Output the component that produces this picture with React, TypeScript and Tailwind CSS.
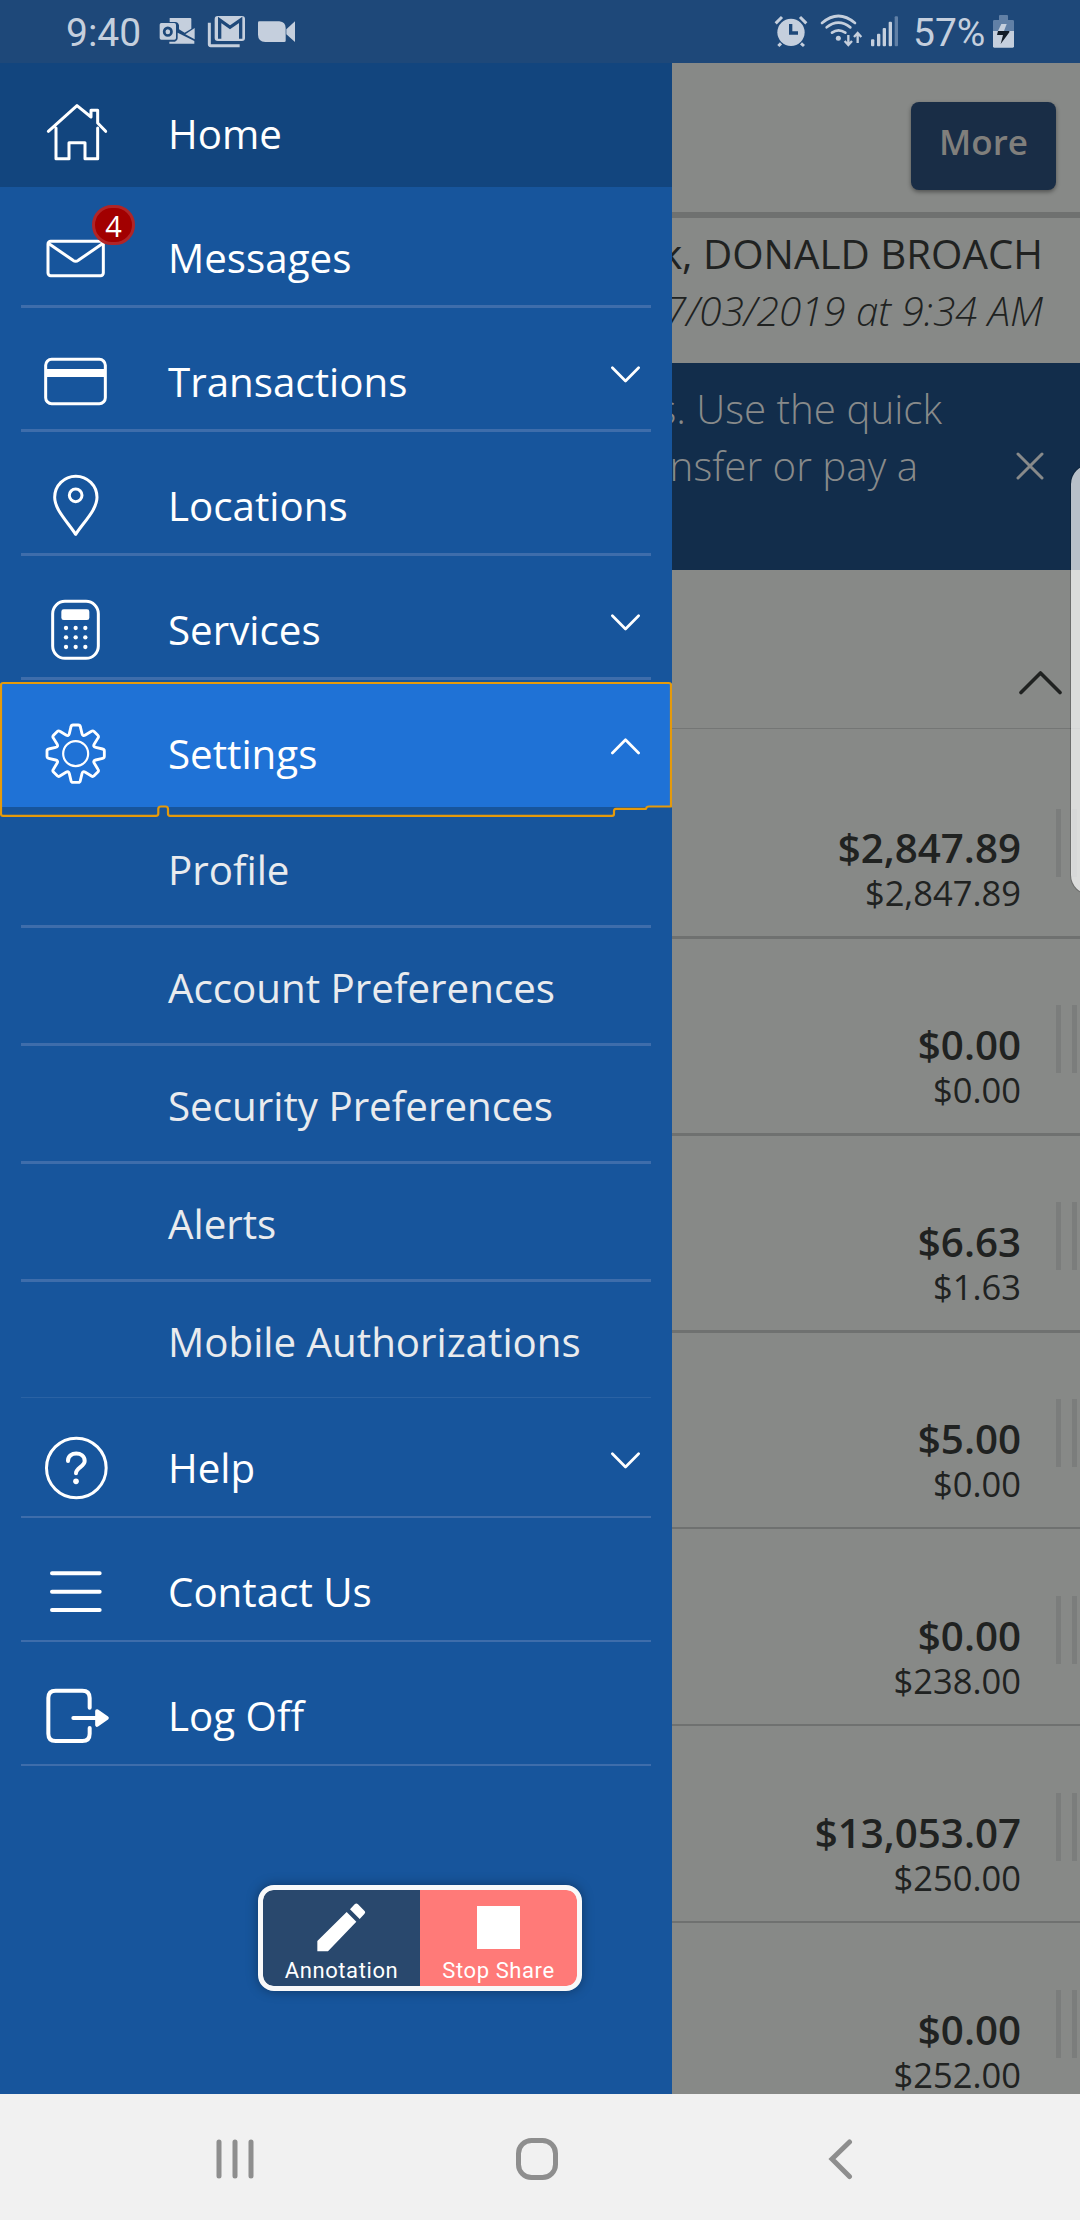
import type { ReactNode } from "react";

const LIGHT = "#c5cfdd";

// Eight-tooth gear outline centred on (227, 281).
function gearPath(): string {
  const at = (x: number, y: number, k: number) => {
    const a = (k * Math.PI) / 4;
    const px = 227 + x * Math.cos(a) - y * Math.sin(a);
    const py = 281 + x * Math.sin(a) + y * Math.cos(a);
    return `${px.toFixed(1)} ${py.toFixed(1)}`;
  };
  let d = "";
  for (let k = 0; k < 8; k++) {
    d += `${k === 0 ? "M" : "L"}${at(-19, -60, k)} L${at(-14, -81, k)} Q${at(-13, -86, k)} ${at(-8, -86, k)} `;
    d += `L${at(8, -86, k)} Q${at(13, -86, k)} ${at(14, -81, k)} L${at(19, -60, k)} `;
    d += `Q${at(21, -51, k)} ${at(-19, -60, k + 1)} `;
  }
  return d + "Z";
}

function MenuIcon({ y, children }: { y: number; children: ReactNode }) {
  return (
    <svg
      className="h-[124px] w-[168px] shrink-0"
      viewBox={`0 ${y} 504 372`}
      fill="none"
      stroke="#fff"
      strokeWidth="9"
      strokeLinecap="round"
      strokeLinejoin="round"
    >
      {children}
    </svg>
  );
}

const icons: Record<string, ReactNode> = {
  Home: (
    <MenuIcon y={189}>
      <path d="M145 394 L231 317 L273 351 V331 H293 V369 L317 394 M168 384 V476 H207 V428 H255 V476 H293 V384" />
    </MenuIcon>
  ),
  Messages: (
    <MenuIcon y={561}>
      <rect x="144" y="724" width="166" height="103" rx="8" />
      <path d="M147 731 L219 781 Q227 787 235 781 L307 731" />
    </MenuIcon>
  ),
  Transactions: (
    <MenuIcon y={-27}>
      <rect x="137" y="118" width="179" height="133" rx="18" />
      <path d="M141 159 H313" strokeWidth="24" strokeLinecap="butt" />
    </MenuIcon>
  ),
  Locations: (
    <MenuIcon y={345}>
      <path d="M227 643 C205 608 164 570 164 532 A63.500 63.500 0 0 1 291 532 C291 570 249 608 227 643 Z" />
      <circle cx="227" cy="526" r="19" />
    </MenuIcon>
  ),
  Services: (
    <MenuIcon y={717}>
      <rect x="158" y="844" width="137" height="171" rx="37" />
      <rect x="184" y="868" width="84" height="32" rx="7" fill="#fff" stroke="none" />
      <g fill="#fff" stroke="none">
        {[924, 952, 981].map((cy) =>
          [198, 227, 256].map((cx) => <circle key={`${cx}-${cy}`} cx={cx} cy={cy} r="6.5" />)
        )}
      </g>
    </MenuIcon>
  ),
  Settings: (
    <MenuIcon y={69}>
      <path d={gearPath()} strokeWidth="8.500" />
      <circle cx="227" cy="281" r="37.500" strokeWidth="6.500" />
    </MenuIcon>
  ),
  Help: (
    <MenuIcon y={51}>
      <circle cx="229" cy="264" r="89.500" />
      <path
        d="M204 243 C203 213 254 213 254 243 C254 260 228 263 228 280"
        strokeWidth="12"
      />
      <circle cx="228" cy="304" r="8.500" fill="#fff" stroke="none" />
    </MenuIcon>
  ),
  "Contact Us": (
    <MenuIcon y={423}>
      <path d="M156 580 H299 M156 635 H299 M156 690 H299" strokeWidth="12" />
    </MenuIcon>
  ),
  "Log Off": (
    <MenuIcon y={795}>
      <path
        d="M269 983 V954 Q269 932 247 932 H167 Q145 932 145 954 V1061 Q145 1083 167 1083 H247 Q269 1083 269 1061 V1044"
        strokeWidth="12"
      />
      <path d="M220 1014 H290" strokeWidth="12" />
      <path d="M291 993 L321 1014 L291 1035 Z" fill="#fff" strokeWidth="11" />
    </MenuIcon>
  ),
};

function Chevron({ up }: { up?: boolean }) {
  return (
    <svg
      className="mr-8 h-[17px] w-[29px]"
      viewBox="0 0 29 17"
      fill="none"
      stroke="#fff"
      strokeWidth="2.700"
      strokeLinecap="round"
      strokeLinejoin="round"
    >
      <path d={up ? "M1.400 15 L14.500 1.700 L27.600 15" : "M1.400 1.700 L14.500 15 L27.600 1.700"} />
    </svg>
  );
}

function MenuRow({
  label,
  tone = "",
  chevron,
  divider = "after:top-[118px] after:h-[3px]",
  badge,
}: {
  label: string;
  tone?: string;
  chevron?: "up" | "down";
  divider?: string;
  badge?: string;
}) {
  return (
    <div
      className={`relative flex h-[124px] shrink-0 items-start after:absolute after:right-[21px] after:left-[21px] after:bg-[#3e6dab] ${divider} ${tone}`}
    >
      {icons[label]}
      {badge && (
        <span className="absolute top-[18px] left-[92px] flex h-[40px] w-[43px] items-center justify-center rounded-[20px] border-[3px] border-[#b02527] bg-[#a20000] text-[29px] leading-none">
          {badge}
        </span>
      )}
      <span className="flex-1 pt-[42px] text-[40.3px] leading-[57px]">{label}</span>
      {chevron && (
        <div className="pt-[55px]">
          <Chevron up={chevron === "up"} />
        </div>
      )}
    </div>
  );
}

const subItems = [
  "Profile",
  "Account Preferences",
  "Security Preferences",
  "Alerts",
  "Mobile Authorizations",
];

const accounts = [
  ["$2,847.89", "$2,847.89"],
  ["$0.00", "$0.00"],
  ["$6.63", "$1.63"],
  ["$5.00", "$0.00"],
  ["$0.00", "$238.00"],
  ["$13,053.07", "$250.00"],
  ["$0.00", "$252.00"],
];

function StatusBar() {
  return (
    <header className="flex h-[63px] shrink-0 items-center justify-between bg-[#1e4879] pr-[65px] pl-[66px] font-[Roboto,sans-serif] text-[39px] leading-[63px] text-[#c5cfdd]">
      <div className="flex h-[63px] items-center">
        <span className="w-[93px] pt-1">9:40</span>
        <svg className="h-[63px] w-[137px]" viewBox="477 0 411 189" fill={LIGHT}>
          <path d="M509 54 H571 Q574 54 574 57 V86 L554 98 L537 88 V76 Q534 66 526 66 H509 Z" />
          <path d="M584 84 V118 L556 103 Z M533 98 L583 123 V131 H508 V125 H525 Q533 123 533 115 Z" />
          <rect x="479" y="69" width="49" height="50" rx="5" />
          <ellipse cx="503.500" cy="95" rx="11" ry="11.500" fill="none" stroke="#1e4879" strokeWidth="8" />
          <path d="M628 68 V133 Q628 137 632 137 H719" fill="none" stroke={LIGHT} strokeWidth="9" />
          <rect x="644" y="48" width="91" height="75" rx="9" />
          <path d="M659 116 V60 L690 82 L722 60 V116" fill="none" stroke="#1e4879" strokeWidth="10" />
          <path d="M774 68 Q774 64 778 64 H838 Q857 66 857 84 V122 Q857 126 853 126 H796 Q774 124 774 104 Z" />
          <path d="M859 88 L885 64 V126 L859 103 Z" />
        </svg>
      </div>
      <div className="flex h-[63px] items-center">
        <svg className="h-[63px] w-[140px]" viewBox="162 0 420 189" fill={LIGHT}>
          <circle cx="213" cy="97" r="41" />
          <path
            d="M167 70 L186 51 M240 51 L259 70 M183 130 L175 138 M243 130 L252 138"
            stroke={LIGHT}
            strokeWidth="9"
          />
          <path d="M212 72 V99 H234" fill="none" stroke="#1e4879" strokeWidth="10" />
          <g fill="none" stroke={LIGHT} strokeWidth="8" strokeLinecap="round">
            <path d="M306 69 Q355 27 405 69 M320 82 Q355 54 391 82 M336 98 Q355 84 376 98" />
          </g>
          <circle cx="355" cy="115" r="7.500" />
          <path
            d="M385 105 V134 M374 123 L385 135 L396 123 M413 129 V100 M402 111 L413 99 L424 111"
            fill="none"
            stroke={LIGHT}
            strokeWidth="7"
          />
          <rect x="453" y="118" width="10" height="21" rx="3" />
          <rect x="471" y="101" width="10" height="38" rx="3" />
          <rect x="488" y="84" width="10" height="55" rx="3" />
          <rect x="506" y="65" width="10" height="74" rx="3" />
          <rect x="524" y="49" width="10" height="90" rx="3" fill="#6180a6" />
        </svg>
        <span className="-ml-px w-[79px] pt-1">57%</span>
        <svg className="h-[63px] w-[23px]" viewBox="816 0 69 189">
          <path d="M837 60 V48 Q837 45 840 45 H861 Q864 45 864 48 V60 H878 Q882 60 882 64 V93 H819 V64 Q819 60 823 60 Z" fill="#6180a6" />
          <path d="M819 93 H882 V139 Q882 143 878 143 H823 Q819 143 819 139 Z" fill={LIGHT} />
          <path d="M844 72 H860 L852 93 H834 Z" fill={LIGHT} />
          <path d="M834 93 H868 V97 L842 132 L849 105 H831 Z" fill="#131c28" />
        </svg>
      </div>
    </header>
  );
}

function Drawer() {
  return (
    <nav className="relative flex h-full w-[672px] shrink-0 flex-col bg-[#17559c] text-white">
      <MenuRow label="Home" tone="bg-[#12457e]" divider="after:hidden" />
      <MenuRow label="Messages" badge="4" />
      <MenuRow label="Transactions" chevron="down" />
      <MenuRow label="Locations" />
      <MenuRow label="Services" chevron="down" />
      <MenuRow label="Settings" chevron="up" tone="bg-[#1f72d6]" divider="after:hidden" />
      <svg
        className="absolute top-[618px] left-0 h-[140px] w-[672px]"
        viewBox="0 681 672 140"
        fill="none"
        stroke="#e59a0b"
        strokeWidth="2.200"
        strokeLinejoin="round"
      >
        <path d="M3 683 H669 Q671 683 671 685 V806.500 H649 Q646.500 806.500 646 808.800 H616 Q614 809 614 811 V814 Q614 815.800 612 815.800 H170 Q168 815.800 168 813.500 V809 Q168 806.500 165.500 806.500 H161 Q158.300 806.500 158.300 809 V813.500 Q158.300 815.800 156 815.800 H3 Q1 815.800 1 814 V685 Q1 683 3 683 Z" />
      </svg>
      {subItems.map((item, i) => (
        <div
          key={item}
          className={`relative h-[118px] shrink-0 pt-[34px] pl-[168px] text-[40.3px] leading-[57px] text-[#e9ebee] ${
            i > 0
              ? "before:absolute before:top-0 before:right-[21px] before:left-[21px] before:h-[3px] before:bg-[#3e6dab]"
              : ""
          }`}
        >
          {item}
        </div>
      ))}
      <div className="mx-[21px] -mb-px h-px shrink-0 bg-[#2a62a4]" />
      <MenuRow label="Help" chevron="down" divider="after:top-[119px] after:h-[2px]" />
      <MenuRow label="Contact Us" divider="after:top-[119px] after:h-[2px]" />
      <MenuRow label="Log Off" divider="after:top-[119px] after:h-[2px]" />
    </nav>
  );
}

function Content() {
  return (
    <main className="flex h-full w-[408px] shrink-0 flex-col overflow-hidden bg-[#878987] text-[#202221]">
      <div className="flex h-[155px] shrink-0 items-start justify-end border-b-[6px] border-[#6f7170] pt-[39px] pr-6">
        <div className="flex h-[88px] w-[145px] justify-center rounded-lg bg-[#192d46] pt-[16px] text-[35px] leading-[48px] font-semibold text-[#807f7c] shadow-[0_2px_4px_rgba(0,0,0,0.4)]">
          More
        </div>
      </div>
      <div className="flex h-[145px] shrink-0 flex-col items-end pt-[7px] pr-[37px] text-[40.3px] leading-[57px] whitespace-nowrap">
        <p>k, DONALD BROACH</p>
        <p className="font-light italic">07/03/2019 at 9:34 AM</p>
      </div>
      <div className="flex h-[207px] shrink-0 items-center justify-between bg-[#122d4b] pr-[36px] text-[40.3px] leading-[57px] font-light whitespace-nowrap text-[#888a8a]">
        <div className="flex h-full w-[270px] flex-col items-end pt-[17px]">
          <p>accounts. Use the quick</p>
          <p className="pr-[24px]">make a transfer or pay a</p>
        </div>
        <svg className="-mt-[2px] h-[28px] w-[28px]" viewBox="0 0 28 28" stroke="#888a8a" strokeWidth="3" strokeLinecap="round">
          <path d="M2 2 L26 26 M26 2 L2 26" />
        </svg>
      </div>
      <div className="flex h-[159px] shrink-0 items-start justify-end border-b border-[#747675] pt-[100px] pr-[17px]">
        <svg
          className="h-[25px] w-[45px]"
          viewBox="0 0 45 25"
          fill="none"
          stroke="#202221"
          strokeWidth="3.600"
          strokeLinecap="round"
          strokeLinejoin="round"
        >
          <path d="M3 22.500 L22.500 3 L42 22.500" />
        </svg>
      </div>
      <div className="flex grow flex-col">
        {accounts.map(([current, available], i) => (
          <div
            key={i}
            className={`flex h-[197px] shrink-0 items-start justify-end pr-[3px] ${
              i === 0
                ? "mt-[10px]"
                : i > 3
                  ? "border-t-2 border-[#6f7170]"
                  : "border-t-[3px] border-[#6f7170]"
            }`}
          >
            <div className={`flex flex-col items-end ${i === 0 ? "pt-[87px]" : i > 3 ? "pt-[85px]" : "pt-[84px]"}`}>
              <p className="text-[40.3px] leading-[43px] font-semibold">{current}</p>
              <p className="text-[34.5px] leading-[47px]">{available}</p>
            </div>
            <div
              className={`ml-[35px] flex gap-[11px] ${i === 0 ? "mt-[70px]" : i > 3 ? "mt-[67px]" : "mt-[66px]"}`}
            >
              <i className="h-[68px] w-[5px] bg-[#7b7d7c]" />
              <i className="h-[68px] w-[5px] bg-[#7b7d7c]" />
            </div>
          </div>
        ))}
      </div>
    </main>
  );
}

function SharePanel() {
  return (
    <div className="absolute top-[1885px] left-[258px] flex h-[106px] w-[324px] overflow-hidden rounded-[16px] border-[5px] border-[#f9f9f9] bg-[#f9f9f9] font-[Roboto,sans-serif] text-[22px] leading-[26px] tracking-[0.6px] text-white shadow-[0_0_12px_rgba(0,0,0,0.35)]">
      <div className="flex w-[157px] flex-col items-center rounded-l-[10px] bg-[#29486d] pt-[13px]">
        <svg className="h-[49px] w-[49px]" viewBox="228 129 147 147" fill="#fff">
          <path d="M229 243 L317 156 L346 185 L261 274 H229 Z M327 148 L341 133 Q346 128 351 133 L370 152 Q375 157 370 162 L356 177 Z" />
        </svg>
        <span className="mt-[6px] whitespace-nowrap">Annotation</span>
      </div>
      <div className="flex w-[157px] flex-col items-center rounded-r-[10px] bg-[#ff7a78] pt-[16px]">
        <i className="size-[43px] bg-white" />
        <span className="mt-[9px] whitespace-nowrap">Stop Share</span>
      </div>
    </div>
  );
}

function NavBar() {
  return (
    <footer className="flex h-[126px] shrink-0 items-center justify-between bg-[#f1f1f1] pt-[4px] pr-[227px] pl-[215px]">
      <svg className="h-[42px] w-[40px]" viewBox="0 0 40 42" stroke="#8e8e8e" strokeWidth="5" strokeLinecap="round">
        <path d="M4 4 V38 M20 4 V38 M36 4 V38" />
      </svg>
      <svg className="mr-[9px] h-[42px] w-[42px]" viewBox="0 0 42 42" fill="none" stroke="#8e8e8e" strokeWidth="5">
        <rect x="2.500" y="2.500" width="37" height="37" rx="13" />
      </svg>
      <svg
        className="h-[42px] w-[25px]"
        viewBox="0 0 25 42"
        fill="none"
        stroke="#8e8e8e"
        strokeWidth="5"
        strokeLinecap="round"
      >
        <path d="M21.500 4 L4 21 L21.500 38.500" />
      </svg>
    </footer>
  );
}

export default function App() {
  return (
    <div className="relative flex h-[2220px] w-[1080px] flex-col overflow-hidden font-['Open_Sans',sans-serif]">
      <StatusBar />
      <div className="flex h-[2031px] shrink-0 overflow-hidden">
        <Drawer />
        <Content />
      </div>
      <NavBar />
      <div className="absolute top-[464px] -right-[20px] h-[431px] w-[30px] rounded-l-[20px] border border-black/20 bg-white/70 bg-clip-padding" />
      <SharePanel />
    </div>
  );
}
